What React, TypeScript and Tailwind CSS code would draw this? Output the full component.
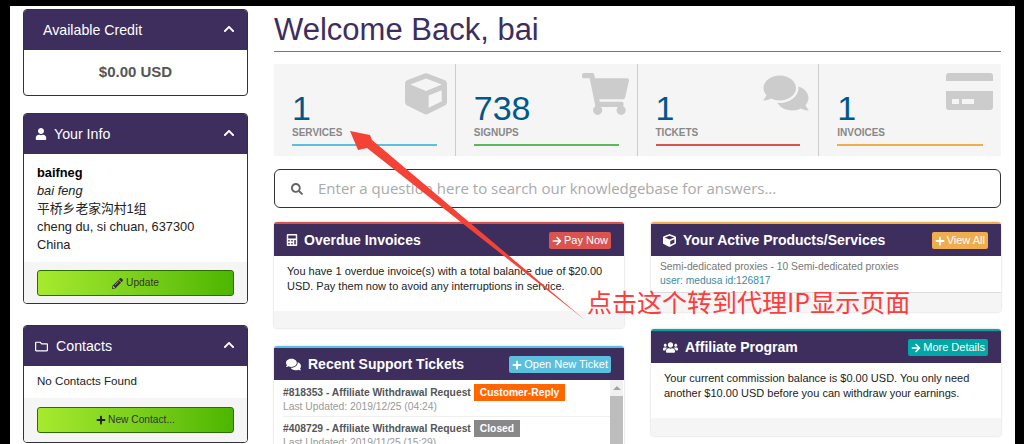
import type { ReactNode } from 'react';
import {
  FaArrowRight,
  FaCalculator,
  FaChevronUp,
  FaComments,
  FaCube,
  FaPencilAlt,
  FaPlus,
  FaRegFolder,
  FaSearch,
  FaShoppingCart,
  FaUser,
  FaUsers,
} from 'react-icons/fa';

const CardIcon = () => (
  <svg viewBox="0 0 47 37" className="w-[47px] h-[37px]" fill="#cccccc">
    <path d="M3 0h41a3 3 0 0 1 3 3v5H0V3a3 3 0 0 1 3-3z" />
    <path fillRule="evenodd" d="M0 18h47v16a3 3 0 0 1-3 3H3a3 3 0 0 1-3-3zM6 26v5h7v-5zM16 26v5h12v-5z" />
  </svg>
);

const stats = [
  { value: '1', label: 'SERVICES', line: 'bg-[#5bc0de]', icon: <FaCube className="w-[42px] h-[42px]" /> },
  { value: '738', label: 'SIGNUPS', line: 'bg-[#5cb85c]', icon: <FaShoppingCart className="w-[47px] h-[42px]" /> },
  { value: '1', label: 'TICKETS', line: 'bg-[#d9534f]', icon: <FaComments className="w-[48px] h-[40px]" /> },
  { value: '1', label: 'INVOICES', line: 'bg-[#f0ad4e]', icon: <CardIcon /> },
];

const SidePanel = ({ icon, title, className, children }: { icon?: ReactNode; title: string; className?: string; children: ReactNode }) => (
  <div className={`border border-[#333] rounded-[4px] overflow-hidden bg-white ${className ?? ''}`}>
    <div className="h-[40px] bg-[#3d2e5e] text-white flex items-center justify-between pl-[12px] pr-[12px] pt-[1px] text-[14.2px]">
      <div className="flex items-center">
        {icon}
        <span className={icon ? '' : 'pl-[7px]'}>{title}</span>
      </div>
      <FaChevronUp className="w-[12px] h-[12px] mb-[4px]" />
    </div>
    {children}
  </div>
);

const GreenButton = ({ icon, label }: { icon: ReactNode; label: string }) => (
  <div className="h-[26px] rounded-[3px] border border-[#2c6b00] bg-gradient-to-r from-[#a6ea2e] to-[#4db600] flex items-center justify-center text-[10.2px] text-[#333]">
    {icon}
    {label}
  </div>
);

const MainPanel = ({
  top,
  icon,
  title,
  action,
  actionIcon,
  actionBg,
  className,
  children,
}: {
  top: string;
  icon: ReactNode;
  title: string;
  action: string;
  actionIcon: ReactNode;
  actionBg: string;
  className?: string;
  children: ReactNode;
}) => (
  <div className={`rounded-[3px] overflow-hidden bg-white shadow-[0_0_2px_rgba(0,0,0,0.25)] flex flex-col ${className ?? ''}`}>
    <div className={`h-[2px] ${top}`} />
    <div className="h-[32px] bg-[#3d2e5e] text-white flex items-center justify-between pl-[13px] pr-[13px]">
      <div className="flex items-center font-bold text-[14px]">
        {icon}
        {title}
      </div>
      <div className={`h-[17px] mt-[1px] rounded-[2px] px-[3px] flex items-center text-[11px] text-white ${actionBg}`}>
        {actionIcon}
        {action}
      </div>
    </div>
    {children}
  </div>
);

export default function App() {
  return (
    <div className="relative h-[444px] overflow-hidden bg-black pt-[6px] pl-[10px] pr-[9px] font-['Liberation_Sans',Arial,'Noto_Sans_CJK_SC',sans-serif]">
      <div className="h-[438px] bg-white flex pl-[13px] pt-[3px]">
        {/* sidebar */}
        <div className="w-[225px] shrink-0 flex flex-col">
          <SidePanel title="Available Credit" className="h-[87px]">
            <div className="text-center font-bold text-[15px] text-[#555] pt-[11px]">$0.00 USD</div>
          </SidePanel>

          <SidePanel title="Your Info" icon={<FaUser className="w-[12px] h-[12px] mr-[7px] ml-[-1px]" />} className="h-[191px] mt-[17px] flex flex-col">
            <div className="h-[108px] pl-[13px] pt-[10px] text-[12.8px] leading-[18px] text-[#222]">
              <div className="font-bold text-black">baifneg</div>
              <div className="italic">bai feng</div>
              <div>平桥乡老家沟村1组</div>
              <div>cheng du, si chuan, 637300</div>
              <div>China</div>
            </div>
            <div className="flex-1 bg-[#f5f5f5] px-[13px] pt-[8px]">
              <GreenButton icon={<FaPencilAlt className="w-[11px] h-[11px] mr-[3px]" />} label="Update" />
            </div>
          </SidePanel>

          <SidePanel title="Contacts" icon={<FaRegFolder className="w-[13px] h-[13px] mr-[8px] ml-[-1px]" />} className="h-[118px] mt-[21px] flex flex-col">
            <div className="h-[32px] pl-[13px] pt-[6px] text-[11.6px] text-[#222]">No Contacts Found</div>
            <div className="flex-1 bg-[#f5f5f5] px-[13px] pt-[9px]">
              <GreenButton icon={<FaPlus className="w-[10px] h-[10px] mr-[2px] text-[#222]" />} label="New Contact..." />
            </div>
          </SidePanel>
        </div>

        {/* main */}
        <div className="w-[727px] ml-[26px] shrink-0">
          <div className="h-[43px] border-b border-[#777] text-[31px] leading-[42px] text-[#3d2e5e]">Welcome Back, bai</div>

          <div className="mt-[12px] h-[92px] bg-[#f5f5f5] grid grid-cols-4">
            {stats.map((stat, i) => (
              <div key={stat.label} className={`relative pl-[18px] pr-[18px] pt-[26px] ${i < 3 ? 'border-r border-[#ccc]' : ''}`}>
                <div className="absolute right-[8px] top-[9px] text-[#cccccc]">{stat.icon}</div>
                <div className="text-[34px] leading-[36px] text-[#00578c]">{stat.value}</div>
                <div className="text-[10px] leading-[12px] font-bold text-[#888] mt-[1px]">{stat.label}</div>
                <div className={`h-[2px] mt-[5px] ${stat.line}`} />
              </div>
            ))}
          </div>

          <div className="mt-[13px] h-[39px] border border-[#333] rounded-[6px] flex items-center pl-[16px] font-['Open_Sans',sans-serif] text-[15px] text-[#aaa]">
            <FaSearch className="w-[12px] h-[12px] text-[#666] mr-[15px]" />
            Enter a question here to search our knowledgebase for answers...
          </div>

          <div className="mt-[14px] grid grid-cols-2 gap-x-[27px]">
            <div className="flex flex-col">
              <MainPanel
                top="bg-[#d9534f]"
                icon={<FaCalculator className="w-[12px] h-[12px] mr-[6px] ml-[-1px]" />}
                title="Overdue Invoices"
                action="Pay Now"
                actionIcon={<FaArrowRight className="w-[10px] h-[10px] mr-[2px]" />}
                actionBg="bg-[#d9534f]"
                className="h-[106px]"
              >
                <div className="h-[55px] px-[13px] pt-[8px] text-[11px] leading-[15px] text-[#222]">
                  You have 1 overdue invoice(s) with a total balance due of $20.00 USD. Pay them now to avoid any interruptions in service.
                </div>
                <div className="flex-1 bg-[#f5f5f5]" />
              </MainPanel>

              <MainPanel
                top="bg-[#5bc0de]"
                icon={<FaComments className="w-[15px] h-[15px] mr-[7px] ml-[-1px]" />}
                title="Recent Support Tickets"
                action="Open New Ticket"
                actionIcon={<FaPlus className="w-[10px] h-[10px] mr-[2px]" />}
                actionBg="bg-[#5bc0de]"
                className="mt-[18px] h-[120px]"
              >
                <div className="flex-1 flex pl-[9px] text-[10.3px] overflow-hidden">
                  <div className="flex-1">
                    <div className="h-[37px] pt-[4px] border-b border-[#f0f0f0]">
                      <div className="flex items-center h-[17px]">
                        <span className="font-bold text-[#555]">#818353 - Affiliate Withdrawal Request</span>
                        <span className="ml-[3px] h-[17px] px-[6px] bg-[#ff6600] text-white font-bold flex items-center">Customer-Reply</span>
                      </div>
                      <div className="text-[#999] leading-[12px]">Last Updated: 2019/12/25 (04:24)</div>
                    </div>
                    <div className="pt-[3px]">
                      <div className="flex items-center h-[17px]">
                        <span className="font-bold text-[#555]">#408729 - Affiliate Withdrawal Request</span>
                        <span className="ml-[3px] h-[17px] px-[6px] bg-[#888] text-white font-bold flex items-center">Closed</span>
                      </div>
                      <div className="text-[#999] leading-[12px]">Last Updated: 2019/11/25 (15:29)</div>
                    </div>
                  </div>
                  <div className="w-[13px] mr-[1px] bg-[#f1f1f1] flex flex-col items-center">
                    <div className="mt-[6px] w-0 h-0 border-x-[4px] border-x-transparent border-b-[4px] border-b-[#a3a3a3]" />
                    <div className="mt-[6px] w-full flex-1 bg-[#bdbdbd]" />
                  </div>
                </div>
              </MainPanel>
            </div>

            <div className="flex flex-col">
              <MainPanel
                top="bg-[#f0ad4e]"
                icon={<FaCube className="w-[13px] h-[13px] mr-[7px] ml-[-1px]" />}
                title="Your Active Products/Services"
                action="View All"
                actionIcon={<FaPlus className="w-[10px] h-[10px] mr-[2px]" />}
                actionBg="bg-[#f0ad4e]"
                className="h-[90px]"
              >
                <div className="h-[37px] pl-[9px] pt-[4px] text-[10.3px] leading-[14px] border-b border-[#ddd]">
                  <div className="text-[#777]">Semi-dedicated proxies - 10 Semi-dedicated proxies</div>
                  <div className="text-[#3b8ca3]">user: medusa id:126817</div>
                </div>
                <div className="flex-1 bg-[#f5f5f5]" />
              </MainPanel>

              <MainPanel
                top="bg-[#00a7a7]"
                icon={<FaUsers className="w-[15px] h-[15px] mr-[7px] ml-[-1px]" />}
                title="Affiliate Program"
                action="More Details"
                actionIcon={<FaArrowRight className="w-[10px] h-[10px] mr-[2px]" />}
                actionBg="bg-[#00a7a7]"
                className="mt-[17px] h-[107px]"
              >
                <div className="h-[55px] px-[13px] pt-[8px] text-[11px] leading-[15px] text-[#222]">
                  Your current commission balance is $0.00 USD. You only need another $10.00 USD before you can withdraw your earnings.
                </div>
                <div className="flex-1 bg-[#f5f5f5]" />
              </MainPanel>
            </div>
          </div>
        </div>
      </div>

      {/* red annotation drawn over the page */}
      <svg className="absolute left-0 top-0 pointer-events-none" width="1024" height="444" viewBox="0 0 1024 444">
        <path d="M350 131 L370 135 L372 140 L585 320 L367 148 L358 150 Z" fill="#f44336" />
      </svg>
      <div className="absolute left-[587px] top-[286px] text-[25px] leading-[30px] text-[#ff3b3b] font-['Noto_Sans_CJK_SC',sans-serif]">点击这个转到代理IP显示页面</div>
    </div>
  );
}
